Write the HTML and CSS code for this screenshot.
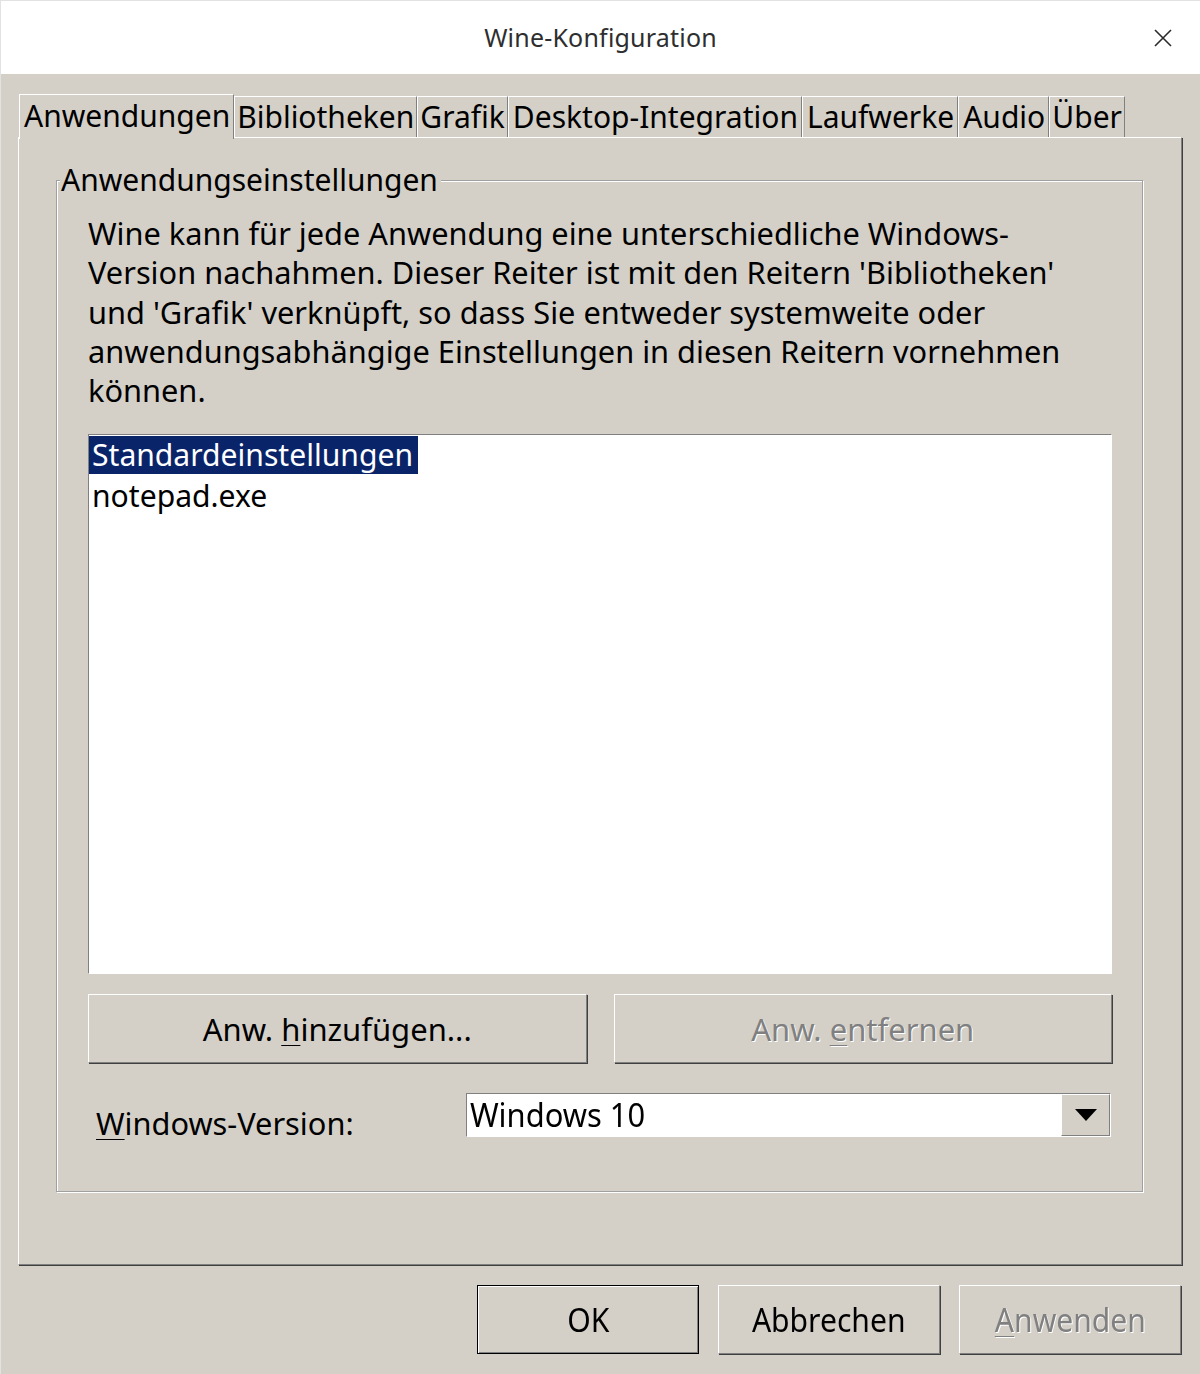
FILE: index.html
```html
<!DOCTYPE html>
<html lang="de">
<head>
<meta charset="utf-8">
<title>Wine-Konfiguration</title>
<link rel="stylesheet" href="styles.css">
</head>
<body>
<div class="window">
  <div class="titlebar">
    <span class="title">Wine-Konfiguration</span>
    <svg class="close" width="18" height="18" viewBox="0 0 18 18"><path d="M1 1L17 17M17 1L1 17" stroke="#2a2a2a" stroke-width="1.6" fill="none"/></svg>
  </div>
  <div class="client">
    <div class="tabs">
      <div class="tab active">Anwendungen</div>
      <div class="tab">Bibliotheken</div>
      <div class="tab">Grafik</div>
      <div class="tab wide">Desktop-Integration</div>
      <div class="tab wide">Laufwerke</div>
      <div class="tab wide">Audio</div>
      <div class="tab">Über</div>
    </div>
    <div class="panel">
      <fieldset class="group">
        <legend class="legend">Anwendungseinstellungen</legend>
        <p class="desc">Wine kann für jede Anwendung eine unterschiedliche Windows-<br>Version nachahmen. Dieser Reiter ist mit den Reitern 'Bibliotheken'<br>und 'Grafik' verknüpft, so dass Sie entweder systemweite oder<br>anwendungsabhängige Einstellungen in diesen Reitern vornehmen<br>können.</p>
        <div class="listbox">
          <div class="item"><span class="sel">Standardeinstellungen</span></div>
          <div class="item"><span class="txt">notepad.exe</span></div>
        </div>
        <div class="btnrow">
          <div class="btn"><span class="label">Anw. <u>h</u>inzufügen...</span></div>
          <div class="btn disabled"><span class="label">Anw. <u>e</u>ntfernen</span></div>
        </div>
        <div class="verrow">
          <span class="verlabel"><u>W</u>indows-Version:</span>
          <div class="combo">
            <span class="combotext">Windows 10</span>
            <div class="arrow"><svg width="22" height="12" viewBox="0 0 22 12"><path d="M0 0H22L11 12Z" fill="#000"/></svg></div>
          </div>
        </div>
      </fieldset>
    </div>
    <div class="footer">
      <div class="btn fbtn default"><span class="narrow">OK</span></div>
      <div class="btn fbtn"><span class="narrow">Abbrechen</span></div>
      <div class="btn fbtn disabled"><span class="narrow"><u>A</u>nwenden</span></div>
    </div>
  </div>
</div>
</body>
</html>
```
FILE: styles.css
```css
* { box-sizing: border-box; }
html, body { margin: 0; padding: 0; }
body {
  width: 1200px;
  height: 1374px;
  font-family: "Noto Sans", "Open Sans", sans-serif;
  color: #000;
  background: #d4d0c8;
}
.window {
  width: 1200px;
  height: 1374px;
  display: flex;
  flex-direction: column;
  border: 1px solid #e2e2e2;
  border-bottom: none;
  border-right: none;
}
.titlebar {
  height: 73px;
  background: #fff;
  display: flex;
  align-items: center;
  justify-content: center;
  position: relative;
  flex: none;
  padding-bottom: 2px;
}
.title {
  font-size: 25px;
  color: #2e2e2e;
  letter-spacing: 0.2px;
}
.close {
  position: absolute;
  right: 28px;
  top: 28px;
}
.client {
  flex: 1;
  background: #d4d0c8;
  padding: 20px 17px 0 17px;
  display: flex;
  flex-direction: column;
}
.tabs {
  display: flex;
  height: 43px;
  align-items: flex-end;
  position: relative;
  z-index: 2;
  padding-left: 1px;
}
.tab {
  height: 41px;
  font-size: 30px;
  line-height: 40px;
  padding: 0 2px 0 2px;
  border-top: 1px solid #fff;
  border-left: 1px solid #fff;
  border-right: 1px solid #808080;
  white-space: nowrap;
}
.tab.wide {
  padding: 0 3px 0 4px;
}
.tab.active {
  height: 45px;
  margin-bottom: -2px;
  padding: 0 3px 0 4px;
  background: #d4d0c8;
  line-height: 42px;
}
.panel {
  height: 1128px;
  border-top: 1px solid #fff;
  border-left: 1px solid #fff;
  border-right: 1px solid #808080;
  border-bottom: 1px solid #808080;
  box-shadow: 1px 1px 0 #404040;
  padding: 24px 38px 0 37px;
  width: 1164px;
}
.group {
  margin: 0;
  padding: 0 30px 0 31px;
  border: 1px solid #a0a0a0;
  box-shadow: 1px 1px 0 #fff, inset 1px 1px 0 #fff;
  height: 1030px;
  min-width: 0;
}
.legend {
  font-size: 30px;
  line-height: 36px;
  padding: 0 3px 0 1px;
  margin-left: -28px;
  background: #d4d0c8;
}
.desc {
  margin: 16px 0 0 0;
  font-size: 30.75px;
  line-height: 39.3px;
}
.listbox {
  margin-top: 24px;
  height: 540px;
  background: #fff;
  border-top: 1px solid #808080;
  border-left: 1px solid #808080;
  border-right: 1px solid #fff;
  border-bottom: 1px solid #fff;
  padding: 1px 0 0 0;
}
.item {
  height: 41px;
  font-size: 30.1px;
  line-height: 38px;
}
.sel {
  display: inline-block;
  background: #0a246a;
  color: #fff;
  padding: 0 5px 0 3px;
  height: 38px;
}
.txt { padding-left: 3px; }
.btnrow {
  display: flex;
  gap: 27px;
  margin-top: 20px;
}
.btn {
  flex: 1;
  height: 69px;
  display: flex;
  align-items: center;
  justify-content: center;
  font-size: 31px;
  border-top: 1px solid #fff;
  border-left: 1px solid #fff;
  border-right: 1px solid #808080;
  border-bottom: 1px solid #808080;
  box-shadow: 1px 1px 0 #404040;
  background: #d4d0c8;
  white-space: nowrap;
}
.btn u { text-underline-offset: 4px; text-decoration-thickness: 1px; }
.btn.disabled {
  color: #808080;
  text-shadow: 1px 1px 0 #fff;
}
.verrow {
  display: flex;
  align-items: flex-start;
  margin-top: 30px;
}
.verlabel {
  font-size: 30.75px;
  width: 378px;
  padding-left: 8px;
  padding-top: 9px;
  line-height: 42px;
  flex: none;
}
.verlabel u { text-underline-offset: 4px; text-decoration-thickness: 1px; }
.combo {
  width: 645px;
  height: 44px;
  background: #fff;
  border-top: 1px solid #808080;
  border-left: 1px solid #808080;
  border-right: 1px solid #fff;
  border-bottom: 1px solid #fff;
  display: flex;
  align-items: stretch;
  flex: none;
}
.combotext {
  flex: 1;
  font-size: 32px;
  line-height: 42px;
  padding-left: 3px;
  display: inline-block;
  transform: scaleX(0.965);
  transform-origin: left center;
}
.arrow {
  width: 49px;
  background: #d4d0c8;
  border-top: 1px solid #fff;
  border-left: 1px solid #fff;
  border-right: 1px solid #808080;
  border-bottom: 1px solid #808080;
  display: flex;
  align-items: center;
  justify-content: center;
}
.footer {
  display: flex;
  justify-content: flex-end;
  gap: 19px;
  margin-top: 20px;
  padding-right: 2px;
}
.fbtn {
  flex: none;
  width: 222px;
  height: 69px;
}
.fbtn.default {
  border: 1px solid #000;
  box-shadow: inset 1px 1px 0 #fff, inset -1px -1px 0 #808080;
}
.narrow {
  display: inline-block;
  font-size: 32px;
  transform: scaleX(0.94);
}
```
